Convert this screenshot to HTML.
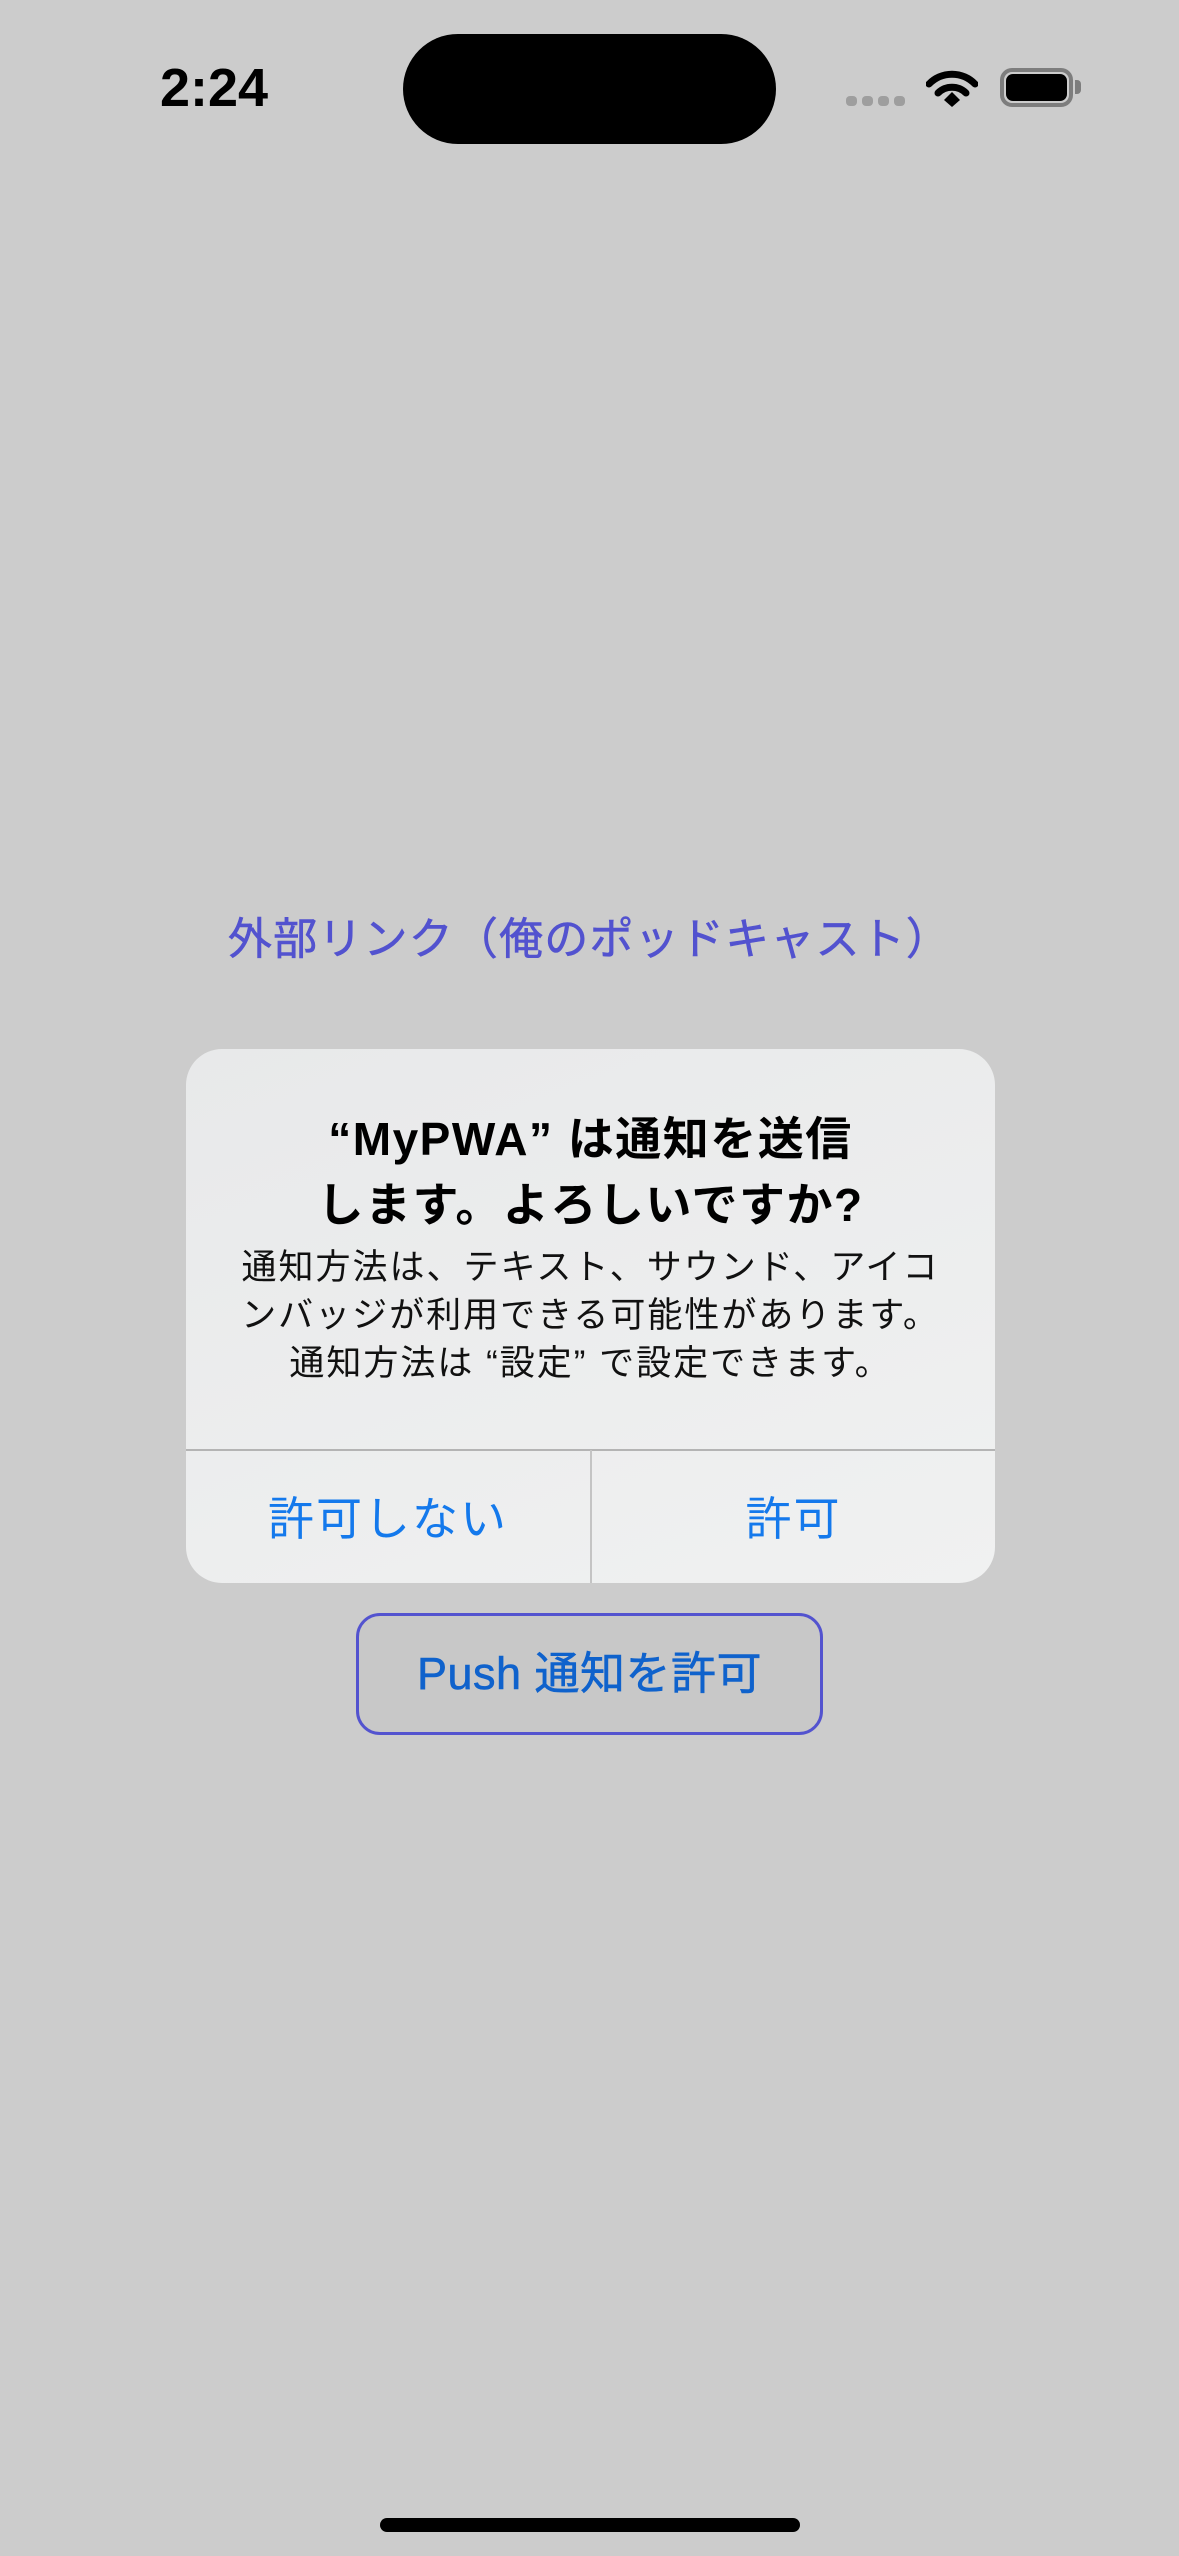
<!DOCTYPE html>
<html><head><meta charset="utf-8"><style>
*{margin:0;padding:0;box-sizing:border-box}
html,body{width:1179px;height:2556px;background:#cccccc;overflow:hidden;position:relative;font-family:"Liberation Sans","Noto Sans CJK JP",sans-serif}
.abs{position:absolute}
.c{text-align:center;white-space:nowrap}
</style></head><body>
<div class="abs c" style="left:134px;top:56px;width:160px;font-size:54px;font-weight:bold;line-height:64px;color:#000;">2:24</div>
<div class="abs" style="left:403px;top:34px;width:373px;height:110px;border-radius:55px;background:#000"></div>
<div class="abs" style="left:846px;top:96px;width:11px;height:10px;border-radius:4px;background:#9e9e9e"></div>
<div class="abs" style="left:862px;top:96px;width:11px;height:10px;border-radius:4px;background:#9e9e9e"></div>
<div class="abs" style="left:878px;top:96px;width:11px;height:10px;border-radius:4px;background:#9e9e9e"></div>
<div class="abs" style="left:894px;top:96px;width:11px;height:10px;border-radius:4px;background:#9e9e9e"></div>
<svg class="abs" style="left:926px;top:68px" width="52" height="40" viewBox="0 0 52 40">
<path d="M3 16 A32 32 0 0 1 49 16" stroke="#000" stroke-width="7" fill="none" stroke-linecap="round"/>
<path d="M12 25 A20 20 0 0 1 40 25" stroke="#000" stroke-width="7" fill="none" stroke-linecap="round"/>
<path d="M18 32 L26 24 L34 32 L26 39 Z" fill="#000"/>
</svg>
<div class="abs" style="left:1000px;top:68px;width:73px;height:39px;border:4px solid #7d7d7d;border-radius:12px"></div>
<div class="abs" style="left:1006px;top:74px;width:61px;height:27px;border-radius:7px;background:#000"></div>
<div class="abs" style="left:1075px;top:80px;width:6px;height:14px;border-radius:0 4px 4px 0;background:#7d7d7d"></div>

<div class="abs c" style="left:0;top:910px;width:1179px;font-size:44px;line-height:60px;color:#5252cf;letter-spacing:1.2px;-webkit-text-stroke:0.6px #5252cf">外部リンク（俺のポッドキャスト）</div>

<div class="abs" style="left:186px;top:1049px;width:809px;height:534px;border-radius:36px;background:linear-gradient(160deg,#e8e9ea,#f0f1f1);overflow:hidden">
 <div class="abs c" style="left:0;top:57px;width:809px;font-size:46px;font-weight:bold;line-height:66px;color:#000;letter-spacing:1.5px">“MyPWA” は通知を送信<br>します。よろしいですか?</div>
 <div class="abs c" style="left:0;top:195px;width:809px;font-size:35px;line-height:48px;color:#111;letter-spacing:2px">通知方法は、テキスト、サウンド、アイコ<br>ンバッジが利用できる可能性があります。<br>通知方法は “設定” で設定できます。</div>
 <div class="abs" style="left:0;top:400px;width:809px;height:2px;background:#b4b4b4"></div>
 <div class="abs" style="left:404px;top:401px;width:2px;height:140px;background:#c4c4c4"></div>
 <div class="abs c" style="left:0;top:440px;width:404px;font-size:46px;line-height:60px;color:#1479ec;letter-spacing:2px">許可しない</div>
 <div class="abs c" style="left:406px;top:440px;width:403px;font-size:46px;line-height:60px;color:#1479ec;letter-spacing:2px">許可</div>
</div>

<div class="abs" style="left:356px;top:1613px;width:467px;height:122px;border:3px solid #5353cf;border-radius:24px;background:#c8c8c8"></div>
<div class="abs c" style="left:356px;top:1644px;width:467px;font-size:45px;line-height:60px;color:#0f62cc;letter-spacing:0.5px;-webkit-text-stroke:0.6px #0f62cc">Push 通知を許可</div>

<div class="abs" style="left:380px;top:2518px;width:420px;height:14px;border-radius:7px;background:#000"></div>
</body></html>
